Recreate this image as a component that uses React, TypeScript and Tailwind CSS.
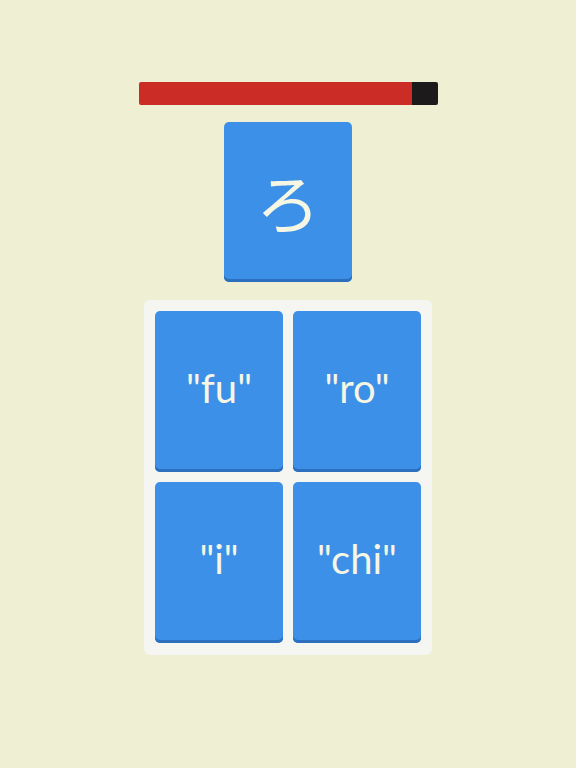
import React from 'react';

const answers = ['"fu"', '"ro"', '"i"', '"chi"'];

function Card({ children, className = '' }: { children: React.ReactNode; className?: string }) {
  return (
    <div
      className={`flex h-[160px] w-[128px] items-center justify-center rounded-[5px] bg-[#3d90e7] text-[#f6f6e4] shadow-[inset_0_-3px_0_#2c6fbe] ${className}`}
    >
      {children}
    </div>
  );
}

export default function App() {
  return (
    <div className="flex min-h-[768px] w-full flex-col items-center bg-[#efefd4] pt-[82px] font-['Lato',sans-serif]">
      {/* timer */}
      <div className="flex h-[23px] w-[299px] overflow-hidden rounded-[2px]">
        <div className="h-full w-[273px] bg-[#cc2c26]" />
        <div className="h-full flex-1 bg-[#1d1a1b]" />
      </div>

      <Card className="mt-[17px] w-[127px]">
        <span className="-mt-1 font-['Noto_Sans_CJK_JP',sans-serif] text-[64px] font-normal leading-none">
          ろ
        </span>
      </Card>

      <div className="mt-[18px] grid grid-cols-2 gap-[10px] rounded-[6px] bg-[#f5f5f2] p-[11px] pb-[12px]">
        {answers.map((a) => (
          <Card key={a} className="h-[161px]">
            <span className="-mt-2 text-[40px] leading-none">{a}</span>
          </Card>
        ))}
      </div>
    </div>
  );
}
